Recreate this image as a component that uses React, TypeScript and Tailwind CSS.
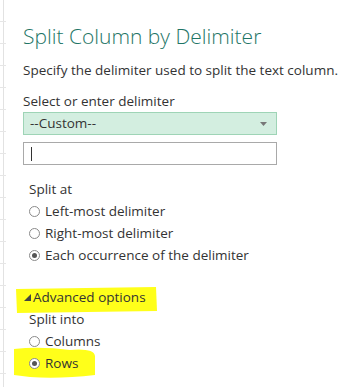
import React from "react";

function Radio({ checked }: { checked?: boolean }) {
  return (
    <span className="flex h-[11px] w-[11px] shrink-0 items-center justify-center rounded-full border border-[#8a8a8a] bg-white">
      {checked && <span className="h-[5px] w-[5px] rounded-full bg-[#555]" />}
    </span>
  );
}

function Option({ label, checked }: { label: string; checked?: boolean }) {
  return (
    <label className="flex h-[22px] items-center gap-[5px] pl-[29px]">
      <Radio checked={checked} />
      <span>{label}</span>
    </label>
  );
}

export default function App() {
  return (
    <div className="relative h-[387px] w-[359px] overflow-hidden bg-white font-['Segoe_UI','Open_Sans',sans-serif] text-[13.5px] text-[#333]">
      {/* faint ruler on the left */}
      <div className="absolute left-[3px] top-0 h-full w-px bg-[#e2e2e2]" />
      <div className="absolute left-0 top-0 h-full w-[6px] bg-[repeating-linear-gradient(to_bottom,transparent_0,transparent_21px,#e6e6e6_21px,#e6e6e6_22px)]" />

      {/* highlighter marks */}
      <svg className="absolute left-0 top-0" width="359" height="387">
        <path d="M16 289 L156 287 L157 311 L17 313 Z" fill="#ffff1a" />
        <path d="M14 349 Q40 346 70 350 Q94 348 95 356 L95 375 Q60 379 30 377 L14 375 Z" fill="#ffff1a" />
      </svg>

      <div className="relative flex flex-col pl-[23px] pt-[21px]">
        <h1 className="text-[21px] font-light leading-[30px] text-[#1e7566]">Split Column by Delimiter</h1>
        <p className="mt-[10px] leading-[18px]">Specify the delimiter used to split the text column.</p>
        <p className="mt-[13px] leading-[18px]">Select or enter delimiter</p>

        <div className="mt-[2px] flex h-[23px] w-[254px] items-center justify-between border border-[#9ed4b6] bg-[#d3eee0] pl-[6px] pr-[9px]">
          <span>--Custom--</span>
          <svg width="7" height="4" viewBox="0 0 7 4">
            <path d="M0 0 H7 L3.5 4 Z" fill="#777" />
          </svg>
        </div>

        <div className="mt-[7px] flex h-[23px] w-[254px] items-center border border-[#a9a9a9] bg-white pl-[7px]">
          <span className="h-[14px] w-px bg-[#333]" />
        </div>

        <div className="-ml-[23px] mt-[13px] flex flex-col">
          <p className="flex h-[22px] items-center pl-[29px]">Split at</p>
          <Option label="Left-most delimiter" />
          <Option label="Right-most delimiter" />
          <Option label="Each occurrence of the delimiter" checked />
        </div>

        <div className="-ml-[23px] mt-[20px] flex flex-col">
          <p className="flex h-[22px] items-center gap-[2px] pl-[24px]">
            <svg width="7" height="7" viewBox="0 0 7 7">
              <path d="M7 0 V7 H0 Z" fill="#444" />
            </svg>
            <span>Advanced options</span>
          </p>
          <p className="flex h-[22px] items-center pl-[29px]">Split into</p>
          <Option label="Columns" />
          <Option label="Rows" checked />
        </div>
      </div>
    </div>
  );
}
